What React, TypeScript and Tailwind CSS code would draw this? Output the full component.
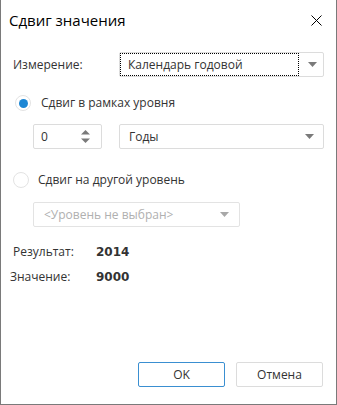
function Caret({ muted }: { muted?: boolean }) {
    return (
        <svg width="9" height="5" viewBox="0 0 9 5" className="shrink-0">
            <path d="M0 0 H9 L4.5 5 Z" fill={muted ? '#a8a8a8' : '#7a7a7a'} />
        </svg>
    );
}

function Radio({ checked }: { checked?: boolean }) {
    return (
        <span className="w-[16px] h-[16px] rounded-full border border-[#e3e3e3] bg-white flex items-center justify-center shrink-0">
            {checked && <span className="w-[9px] h-[9px] rounded-full bg-[#1c86d4]" />}
        </span>
    );
}

export default function App() {
    return (
        <div
            className="w-[337px] h-[405px] bg-white border-x border-b border-[#7a7a7a] flex flex-col text-[12px] text-[#333]"
            style={{ fontFamily: '"Open Sans", "Noto Sans", sans-serif' }}
        >
            <div className="h-[40px] flex items-center justify-between pl-[8px] pr-[14px] shrink-0">
                <span className="text-[15px] text-black">Сдвиг значения</span>
                <svg width="11" height="11" viewBox="0 0 11 11">
                    <path d="M0.5 0.5 L10.5 10.5 M10.5 0.5 L0.5 10.5" stroke="#000" strokeWidth="1" />
                </svg>
            </div>

            <div className="mt-[12px] h-[25px] flex items-center">
                <span className="ml-[12px] w-[106px]">Измерение:</span>
                <div className="w-[205px] h-[25px] border border-[#dcdcdc] rounded-[2px] flex items-center">
                    <div className="w-[179px] h-[23px] border border-dotted border-black flex items-center pl-[7px]">
                        Календарь годовой
                    </div>
                    <div className="flex-1 flex justify-center pl-[2px]">
                        <Caret />
                    </div>
                </div>
            </div>

            <div className="mt-[16px] h-[20px] flex items-center pl-[14px]">
                <Radio checked />
                <span className="ml-[10px]">Сдвиг в рамках уровня</span>
            </div>

            <div className="mt-[11px] h-[25px] flex items-center">
                <div className="ml-[32px] w-[69px] h-[25px] border border-[#dcdcdc] rounded-[2px] flex items-center justify-between pl-[7px] pr-[11px]">
                    <span>0</span>
                    <svg width="9" height="13" viewBox="0 0 9 13">
                        <path d="M0 4.5 H9 L4.5 0 Z" fill="#7a7a7a" />
                        <path d="M0 8.5 H9 L4.5 13 Z" fill="#7a7a7a" />
                    </svg>
                </div>
                <div className="ml-[17px] w-[205px] h-[25px] border border-[#dcdcdc] rounded-[2px] flex items-center justify-between pl-[9px] pr-[9px]">
                    <span>Годы</span>
                    <Caret />
                </div>
            </div>

            <div className="mt-[21px] h-[20px] flex items-center pl-[12px]">
                <Radio />
                <span className="ml-[9px]">Сдвиг на другой уровень</span>
            </div>

            <div className="mt-[12px] h-[25px] flex items-center">
                <div className="ml-[32px] w-[207px] h-[25px] border border-[#e3e3e3] rounded-[2px] flex items-center justify-between pl-[10px] pr-[10px] text-[#b0b0b0]">
                    <span>&lt;Уровень не выбран&gt;</span>
                    <Caret muted />
                </div>
            </div>

            <div className="mt-[15px] h-[20px] flex items-center">
                <span className="ml-[12px] w-[83px]">Результат:</span>
                <span className="font-bold" style={{ fontFamily: '"DejaVu Sans", sans-serif' }}>
                    2014
                </span>
            </div>
            <div className="mt-[5px] h-[20px] flex items-center">
                <span className="ml-[9px] w-[86px]">Значение:</span>
                <span className="font-bold" style={{ fontFamily: '"DejaVu Sans", sans-serif' }}>
                    9000
                </span>
            </div>

            <div className="flex-1" />

            <div className="flex justify-end gap-[11px] pr-[13px] pb-[17px]">
                <button className="w-[87px] h-[25px] border border-[#3a8fd1] rounded-[2px] text-[12px] text-[#333]">OK</button>
                <button className="w-[87px] h-[25px] border border-[#dcdcdc] rounded-[2px] text-[12px] text-[#333]">Отмена</button>
            </div>
        </div>
    );
}
